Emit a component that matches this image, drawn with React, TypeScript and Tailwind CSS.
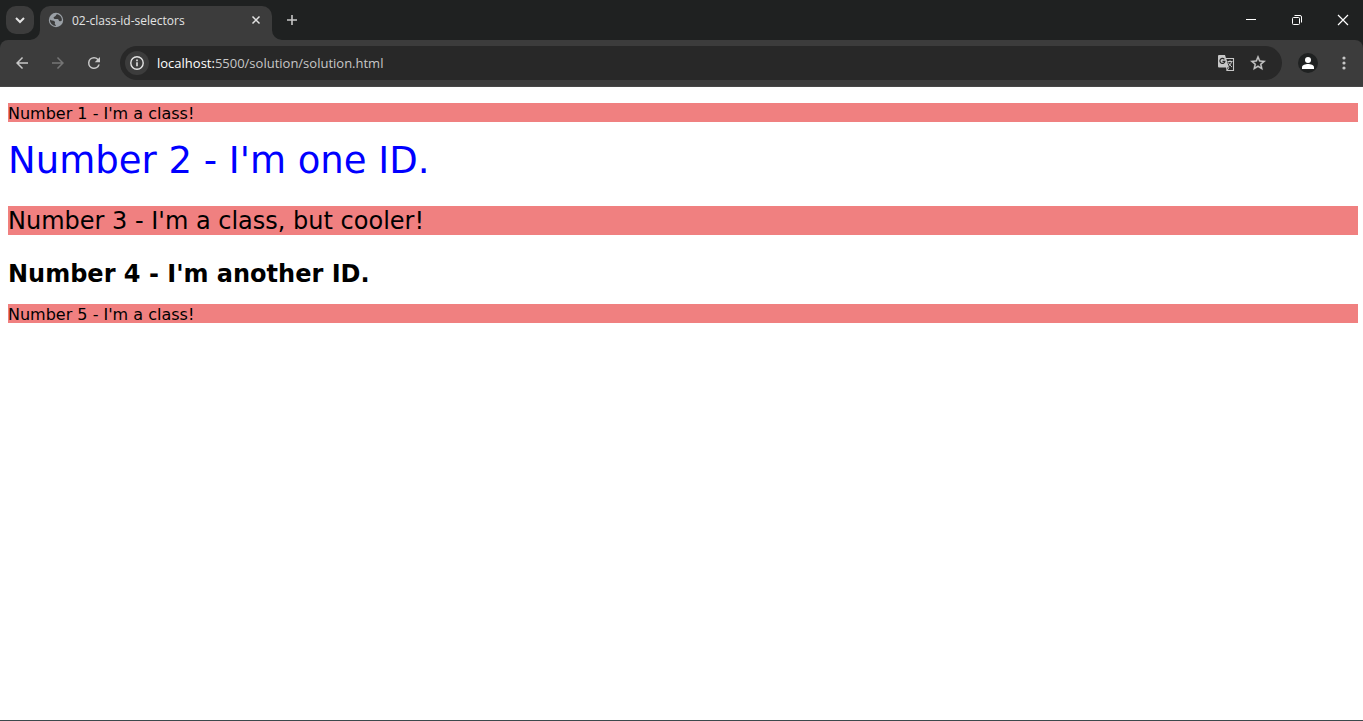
import type { ReactNode } from "react";

function Icon({ size = 16, box = 24, className = "", children }: { size?: number; box?: number; className?: string; children: ReactNode }) {
  return (
    <svg width={size} height={size} viewBox={`0 0 ${box} ${box}`} fill="currentColor" className={className} aria-hidden="true">
      {children}
    </svg>
  );
}

function TabStrip() {
  return (
    <header className="flex h-10 bg-[#1f2121]">
      <div className="flex w-10 shrink-0 items-start pt-1.5 pl-1.5">
        <button aria-label="Search tabs" className="flex size-7 items-center justify-center rounded-[10px] bg-[#3c3c3c] text-[#e3e3e3]">
          <Icon size={16} box={16}>
            <path d="M4 6l4 4 4-4" fill="none" stroke="currentColor" strokeWidth="2" />
          </Icon>
        </button>
      </div>
      <div className="relative mt-1.5 flex w-58 items-center rounded-t-[10px] bg-[#3c3c3c] pr-2 pb-1.5 pl-2">
        <svg className="absolute bottom-0 -left-2.5" width="10" height="10" viewBox="0 0 10 10" aria-hidden="true">
          <path d="M10 0v10H0A10 10 0 0 0 10 0z" fill="#3c3c3c" />
        </svg>
        <svg className="absolute -right-2.5 bottom-0" width="10" height="10" viewBox="0 0 10 10" aria-hidden="true">
          <path d="M0 0v10h10A10 10 0 0 1 0 0z" fill="#3c3c3c" />
        </svg>
        <Icon size={16} box={16} className="shrink-0 text-[#9aa0a6]">
          <circle cx="8" cy="8" r="7.2" />
          <path
            d="M9.500 2.200C7.600 2.300 8.300 4 6.800 4.500c-1.300.4-1.700 1.500-.6 2.200 1.300.8 3-.3 4 .5.9.9.3 1.900 1.700 2.100 1 .1 1.600-.3 2-1.100A6.200 6.200 0 0 0 9.500 2.200zM1.900 7.500c1.300 1.300 3.600.8 4.800 1.900.9.900-.3 1.700.2 2.700.4.8 1.100.9 1 2A6.200 6.200 0 0 1 1.900 7.500z"
            fill="#3c3c3c"
          />
        </Icon>
        <span className="flex-1 truncate pt-0.5 pl-2 text-xs text-[#e3e3e3]">02-class-id-selectors</span>
        <button aria-label="Close tab" className="flex size-4 items-center justify-center text-[#e3e3e3]">
          <Icon size={16} box={16}>
            <path d="M4.500 4.500l7 7M11.500 4.500l-7 7" stroke="currentColor" strokeWidth="1.500" />
          </Icon>
        </button>
      </div>
      <button aria-label="New tab" className="flex w-10 items-center justify-center text-[#c7c7c7]">
        <Icon size={16} box={16}>
          <path d="M8 3v10M3 8h10" stroke="currentColor" strokeWidth="1.600" />
        </Icon>
      </button>
      <div className="ml-auto flex text-white">
        <button aria-label="Minimize" className="flex w-10 items-center justify-center">
          <Icon size={12} box={12}>
            <path d="M1 5.500h10" stroke="currentColor" strokeWidth="1" />
          </Icon>
        </button>
        <button aria-label="Restore" className="flex w-13 items-center justify-center">
          <Icon size={12} box={12}>
            <g fill="none" stroke="currentColor">
              <rect x="1.500" y="3.500" width="7" height="7" rx="1" />
              <path d="M3.500 1.500h5.500a1.500 1.500 0 0 1 1.500 1.500v5.500" />
            </g>
          </Icon>
        </button>
        <button aria-label="Close window" className="flex w-10 items-center justify-center">
          <Icon size={12} box={12}>
            <path d="M1 1l10 10M11 1L1 11" stroke="currentColor" strokeWidth="1.200" />
          </Icon>
        </button>
      </div>
    </header>
  );
}

function Toolbar() {
  return (
    <div className="bg-[#1f2121]">
      <div className="flex h-[47px] items-center rounded-t-lg border-b border-[#474747] bg-[#3c3c3c] pr-[9px] pl-2 text-[#c7c7c7]">
        <button aria-label="Back" className="flex size-7 items-center justify-center">
          <Icon size={18}>
            <path d="M20 11H7.830l5.590-5.590L12 4l-8 8 8 8 1.410-1.410L7.830 13H20v-2z" />
          </Icon>
        </button>
        <button aria-label="Forward" disabled className="ml-2 flex size-7 items-center justify-center text-[#757575]">
          <Icon size={18}>
            <path d="M12 4l-1.410 1.410L16.170 11H4v2h12.170l-5.580 5.590L12 20l8-8z" />
          </Icon>
        </button>
        <button aria-label="Reload" className="ml-2 flex size-7 items-center justify-center">
          <Icon size={18}>
            <path d="M17.650 6.350A7.958 7.958 0 0 0 12 4a8 8 0 1 0 7.730 10h-2.080A6 6 0 1 1 12 6c1.660 0 3.140.69 4.220 1.780L13 11h7V4l-2.350 2.350z" />
          </Icon>
        </button>
        <div className="ml-3 flex h-[34px] flex-1 items-center rounded-full bg-[#282828] pr-3.5 pl-[5px]">
          <button aria-label="View site information" className="flex size-6 items-center justify-center rounded-full bg-[#3c3c3c] text-[#e3e3e3]">
            <Icon size={16} box={16}>
              <circle cx="8" cy="8" r="6.200" fill="none" stroke="currentColor" strokeWidth="1.400" />
              <path d="M7.200 7.200h1.600v4H7.200zM7.200 4.600h1.600v1.600H7.200z" />
            </Icon>
          </button>
          <a href="#page" aria-label="Address" className="flex-1 truncate pt-0.5 pl-2 text-[13px] text-[#c7c7c7]">
            <span className="text-white">localhost:</span>5500/solution/solution.html
          </a>
          <button aria-label="Translate this page" className="flex size-5 items-center justify-center">
            <Icon size={18} box={18}>
              <path d="M8.500 4.500h8v12h-6.500z" fill="none" stroke="currentColor" strokeWidth="1.100" />
              <path d="M2 1h6l4 12.500H2a1 1 0 0 1-1-1V2a1 1 0 0 1 1-1z" />
              <path d="M7.400 5.400A2.500 2.500 0 1 0 7.900 7.400H5.500" fill="none" stroke="#282828" strokeWidth="1.200" />
              <path d="M10.500 7.500h5M13 6.300v1.200M14.600 7.500c-.4 2-1.500 3.500-3 4.500M11.400 8.500c.8 2 2 3.200 3.600 4.500M10 16.500l2-3" fill="none" stroke="currentColor" strokeWidth="1" />
            </Icon>
          </button>
          <button aria-label="Bookmark this tab" className="ml-3 flex size-5 items-center justify-center">
            <Icon size={18}>
              <path stroke="currentColor" strokeWidth="0.5" d="M22 9.240l-7.190-.62L12 2 9.190 8.630 2 9.240l5.460 4.730L5.820 21 12 17.270 18.180 21l-1.630-7.030L22 9.240zM12 15.400l-3.760 2.270 1-4.280-3.320-2.880 4.380-.38L12 6.100l1.710 4.040 4.380.38-3.320 2.880 1 4.280L12 15.400z" />
            </Icon>
          </button>
        </div>
        <button aria-label="Profile" className="ml-4 flex size-5 items-center justify-center rounded-full bg-[#1f2121] text-white">
          <Icon size={16} box={16}>
            <circle cx="8" cy="5" r="3" />
            <path d="M2 14v-1.800C2 10 5.500 9 8 9s6 1 6 3.200V14z" />
          </Icon>
        </button>
        <button aria-label="Browser menu" className="ml-4 flex size-5 items-center justify-center">
          <Icon size={18} box={18}>
            <circle cx="9" cy="4" r="1.600" />
            <circle cx="9" cy="9" r="1.600" />
            <circle cx="9" cy="14" r="1.600" />
          </Icon>
        </button>
      </div>
    </div>
  );
}

export default function App() {
  return (
    <div className="flex min-h-screen flex-col border-b border-[#3b4a4d] bg-white font-['Open_Sans',sans-serif]">
      <TabStrip />
      <Toolbar />
      <main id="page" className="flex-1 py-4 pr-[5px] pl-2 font-['DejaVu_Sans',sans-serif] text-black">
        <p className="bg-[#f08080] pt-0.5 text-base leading-[17px]">Number 1 - I'm a class!</p>
        <div className="mt-4 pt-0.5 text-[37px] leading-[42px] text-[#0000ff]">Number 2 - I'm one ID.</div>
        <p className="mt-6 bg-[#f08080] pt-0.5 text-2xl leading-[27px]">Number 3 - I'm a class, but cooler!</p>
        <div className="mt-6 pt-0.5 text-2xl leading-[27px] font-bold">Number 4 - I'm another ID.</div>
        <p className="mt-4 bg-[#f08080] pt-0.5 text-base leading-[17px]">Number 5 - I'm a class!</p>
      </main>
    </div>
  );
}
